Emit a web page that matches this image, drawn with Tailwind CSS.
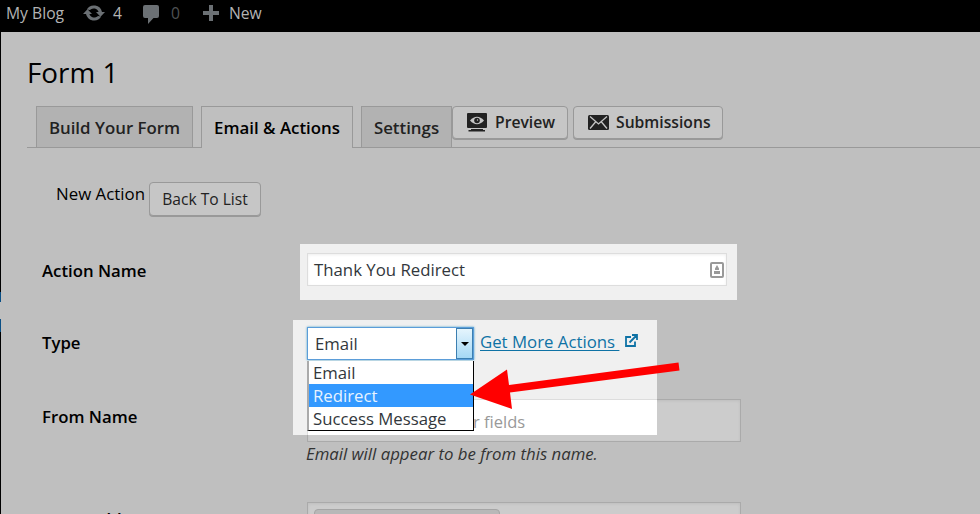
<!DOCTYPE html>
<html lang="en">
<head>
<meta charset="utf-8">
<title>Form 1</title>
<script src="https://cdn.jsdelivr.net/npm/@tailwindcss/browser@4"></script>
</head>
<body class="w-[980px] h-[514px] overflow-hidden bg-[#bfbfbf] font-['Open_Sans','Noto_Sans',sans-serif] text-[16.850px] leading-[24px] whitespace-nowrap text-black">
<header class="h-8 bg-black flex items-center pl-[6px] pb-[6px] text-[#b3b3b3] text-[15.700px]">
  <span class="w-[77px]">My Blog</span>
  <svg class="w-[22px] h-[18px]" viewBox="0 0 22 18" fill="#6b7074">
    <path d="M3.800 5.500A8.300 8.300 0 0 1 19 8H22L17.500 12.800L13 8H15.600A5.200 5.200 0 0 0 7 6z"/>
    <path d="M18.200 12.500A8.300 8.300 0 0 1 3 10H0L4.500 5.200L9 10H6.400A5.200 5.200 0 0 0 15 12z"/>
  </svg>
  <span class="ml-2 w-[30px]">4</span>
  <svg class="w-[16px] h-[20px] mt-[1px]" viewBox="0 0 16 20" fill="#6b7074"><path d="M2 1h12q2 0 2 2v9q0 2-2 2h-3.500L5 20v-6H2q-2 0-2-2V3q0-2 2-2z"/></svg>
  <span class="ml-3 w-[32px] text-[#4f5254]">0</span>
  <svg class="w-4 h-4" viewBox="0 0 16 16"><path d="M8 0v16M0 8h16" stroke="#6b7074" stroke-width="4"/></svg>
  <span class="ml-[10px]">New</span>
</header>
<main class="relative h-[482px] border-l border-black">
  <h1 class="h-[74px] pl-[26px] pt-[20px] text-[27.800px] leading-[40px]">Form 1</h1>
  <nav class="ml-[26px] h-[42px] pl-[9px] flex items-start border-b border-[#999] font-semibold text-[#222]">
    <div class="w-[157px] h-[41px] mr-2 pt-[9px] text-center bg-[#b2b2b2] border border-b-0 border-[#999]">Build Your Form</div>
    <div class="w-[152px] h-[42px] mr-2 pt-[9px] text-center bg-[#bfbfbf] border border-b-0 border-[#999] text-black">Email &amp; Actions</div>
    <div class="w-[91px] h-[41px] pt-[9px] text-center bg-[#b2b2b2] border border-b-0 border-[#999]">Settings</div>
    <div class="w-[116px] h-[33px] mr-[5px] pl-[14px] flex items-center bg-[#c6c6c6] border border-[#999] rounded-[4px] shadow-[0_1px_0_#999] text-[15.700px]">
      <svg class="w-5 h-[19px] mr-2" viewBox="0 0 20 19"><rect width="20" height="15" rx="1" fill="#222"/><path d="M3 7.500Q10 0 17 7.500Q10 15 3 7.500z" fill="#c6c6c6"/><circle cx="10" cy="7.500" r="2.800" fill="#222"/><circle cx="10.500" cy="7" r=".7" fill="#c6c6c6"/><path d="M4 16h12v1h2v1.500H1.500V17H4z" fill="#222"/></svg>
      <span class="pb-[2px]">Preview</span>
    </div>
    <div class="w-[150px] h-[33px] pl-[14px] flex items-center bg-[#c6c6c6] border border-[#999] rounded-[4px] shadow-[0_1px_0_#999] text-[15.700px]">
      <svg class="w-[21px] h-[15px] mr-[7px]" viewBox="0 0 21 15"><rect width="21" height="15" rx="1.500" fill="#222"/><path d="M2 1.500l8.500 7.500L19 1.500M2 13.500l5.500-6.500M19 13.500L13.500 7" fill="none" stroke="#c6c6c6" stroke-width="1.300"/></svg>
      <span class="pb-[2px]">Submissions</span>
    </div>
  </nav>
  <div class="h-[96px] pl-[55px] pt-[34px] flex items-start">
    <span class="w-[93px]">New Action</span>
    <div class="w-[112px] h-[34px] flex items-center justify-center bg-[#c6c6c6] border border-[#999] rounded-[4px] shadow-[0_1px_0_#999] text-[#222] text-[15.600px]">Back To List</div>
  </div>
  <div class="h-[76px] flex items-start">
    <div class="w-[299px] pl-[41px] pt-[15px] font-semibold text-[16.750px]">Action Name</div>
    <div class="w-[437px] h-[56px] bg-[#f0f0f0] pl-[7px] pt-[9px]">
      <div class="w-[420px] h-[33px] pl-[6px] pr-[2.500px] flex items-center justify-between bg-white border border-[#ddd] shadow-[inset_0_1px_3px_rgba(0,0,0,0.07)] text-[#32373c] text-[16.800px]">
        <span>Thank You Redirect</span>
        <svg class="w-[14px] h-[16px]" viewBox="0 0 14 16"><rect x="1" y="1" width="12" height="14" rx="1" fill="#fff" stroke="#999" stroke-width="2"/><path d="M7 3l2 3.500v1.500H5V6.500zM4 9h6v3H4z" fill="#999"/></svg>
      </div>
    </div>
  </div>
  <div class="h-[79px] pl-[41px] pt-[11px] font-semibold text-[16.750px]">Type</div>
  <div class="h-[103px] flex items-start">
    <div class="w-[306px] pl-[41px] pt-[6px] font-semibold text-[16.800px]">From Name</div>
    <div>
      <div class="w-[434px] h-[43px] bg-[#ccc] border border-[#aaa] shadow-[inset_0_1px_3px_rgba(0,0,0,0.07)]"></div>
      <p class="italic text-[#333] text-[16.800px] leading-[24px] -ml-[1px]">Email will appear to be from this name.</p>
    </div>
  </div>
  <div class="h-[12px] flex items-start overflow-hidden">
    <div class="w-[306px] pl-[41px] pt-[7px] font-semibold text-[17.300px] tracking-[-0.2px]">From Address</div>
    <div class="w-[434px] h-[43px] pl-[6px] pt-[6px] bg-[#ccc] border border-[#aaa] shadow-[inset_0_1px_3px_rgba(0,0,0,0.07)]">
      <div class="w-[186px] h-7 bg-[#b8b8b8] border border-[#a5a5a5] rounded-[4px]"></div>
    </div>
  </div>

  <!-- highlighted area over the form -->
  <section class="absolute left-[292px] top-[288px] w-[364px] h-[115px] bg-[#f0f0f0] overflow-hidden">
    <div class="absolute left-[14px] top-[79px] w-[434px] h-[43px] bg-white border border-[#ddd] pt-[10px] pl-[165px] text-[#999] text-[16.500px]">r fields</div>
    <div class="absolute left-[14px] top-[7px] w-[167px] h-[33px] flex items-center bg-white border border-[#5b9dd9] shadow-[0_0_2px_rgba(30,140,190,0.8)] text-[#32373c] text-[16.800px]">
      <span class="flex-1 pl-[7px]">Email</span>
      <span class="w-[17px] h-[31px] border border-[#3c7fb1] bg-linear-to-b from-[#e5f5fd] to-[#a5d8f5] flex items-center justify-center"><svg class="w-2 h-1" viewBox="0 0 8 4"><path d="M0 0h8L4 4z"/></svg></span>
    </div>
    <div class="absolute left-[187px] top-[10px] flex items-center text-[#0e72a5] text-[16.800px]">
      <span class="underline underline-offset-[2px] decoration-1 whitespace-pre">Get More Actions </span>
      <svg class="w-[13px] h-[13px] ml-[6px] mb-[3px]" viewBox="0 0 13 13" fill="none" stroke="#0e72a5" stroke-width="1.800"><path d="M6 3H1v9h9V7.500M7 1h5v5M12 1L4.500 8.500"/></svg>
    </div>
    <div class="absolute left-[14px] top-[41px] w-[167px] h-[70px] bg-white border-l-2 border-l-[#aaa] border-r border-b border-r-black border-b-black text-[#32373c] text-[16.750px] leading-[23px]">
      <div class="pl-1">Email</div>
      <div class="pl-1 bg-[#3399ff] text-[#e8f3ff]">Redirect</div>
      <div class="pl-1">Success Message</div>
    </div>
  </section>
  <svg class="absolute left-[469px] top-[328px] w-[212px] h-[52px]" viewBox="470 360 212 52" fill="#f00"><path d="M470 394.500L507 369.500L509 385L678.500 362.500L679.500 370.500L510 392.500L512 409z"/></svg>
  <div class="absolute -left-px top-[260px] w-px h-[40px] bg-[#bfbfbf] border-t-[10px] border-b-[13px] border-[#0a4f85] box-border"></div>
</main>
</body>
</html>
